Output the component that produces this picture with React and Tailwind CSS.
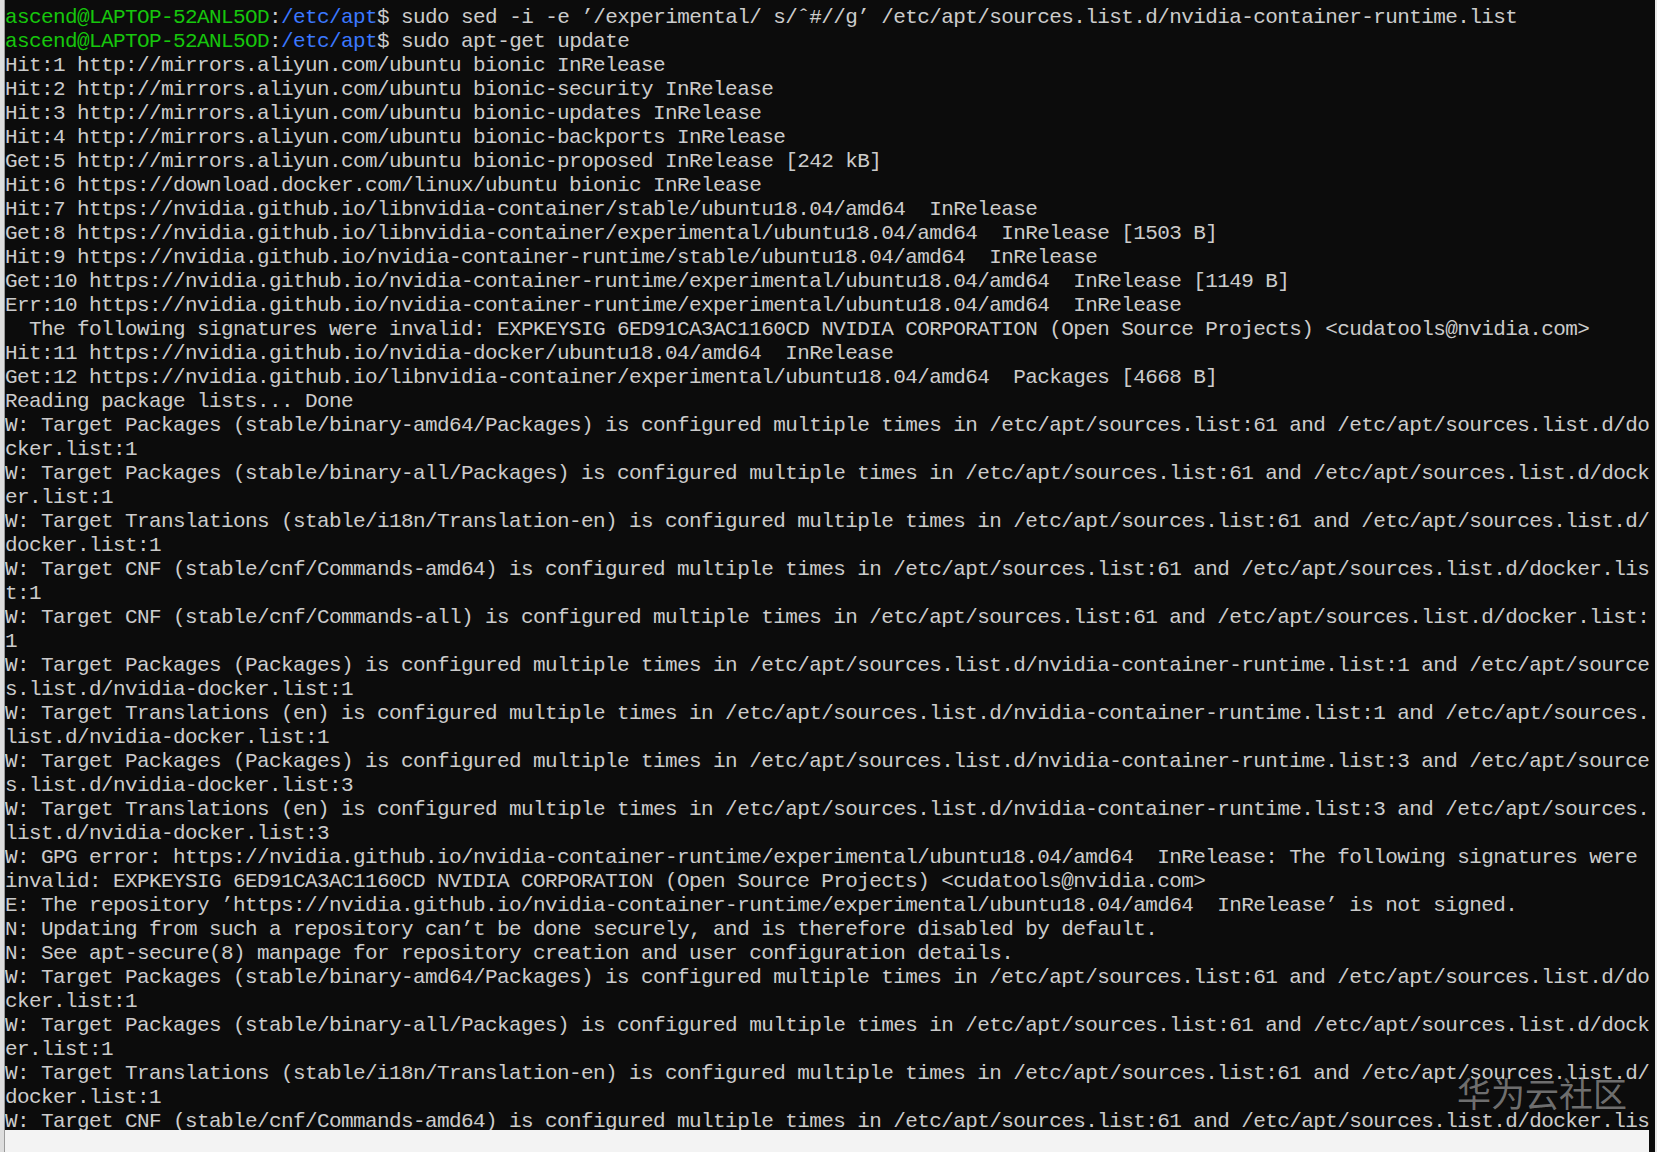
const PROMPT_USER = 'ascend@LAPTOP-52ANL5OD';

const prompts = [
  "sudo sed -i -e \u2019/experimental/ s/\u02c6#//g\u2019 /etc/apt/sources.list.d/nvidia-container-runtime.list",
  'sudo apt-get update',
];

const warnA = [
  'W: Target Packages (stable/binary-amd64/Packages) is configured multiple times in /etc/apt/sources.list:61 and /etc/apt/sources.list.d/do',
  'cker.list:1',
  'W: Target Packages (stable/binary-all/Packages) is configured multiple times in /etc/apt/sources.list:61 and /etc/apt/sources.list.d/dock',
  'er.list:1',
  'W: Target Translations (stable/i18n/Translation-en) is configured multiple times in /etc/apt/sources.list:61 and /etc/apt/sources.list.d/',
  'docker.list:1',
];

const output = [
  'Hit:1 http://mirrors.aliyun.com/ubuntu bionic InRelease',
  'Hit:2 http://mirrors.aliyun.com/ubuntu bionic-security InRelease',
  'Hit:3 http://mirrors.aliyun.com/ubuntu bionic-updates InRelease',
  'Hit:4 http://mirrors.aliyun.com/ubuntu bionic-backports InRelease',
  'Get:5 http://mirrors.aliyun.com/ubuntu bionic-proposed InRelease [242 kB]',
  'Hit:6 https://download.docker.com/linux/ubuntu bionic InRelease',
  'Hit:7 https://nvidia.github.io/libnvidia-container/stable/ubuntu18.04/amd64  InRelease',
  'Get:8 https://nvidia.github.io/libnvidia-container/experimental/ubuntu18.04/amd64  InRelease [1503 B]',
  'Hit:9 https://nvidia.github.io/nvidia-container-runtime/stable/ubuntu18.04/amd64  InRelease',
  'Get:10 https://nvidia.github.io/nvidia-container-runtime/experimental/ubuntu18.04/amd64  InRelease [1149 B]',
  'Err:10 https://nvidia.github.io/nvidia-container-runtime/experimental/ubuntu18.04/amd64  InRelease',
  '  The following signatures were invalid: EXPKEYSIG 6ED91CA3AC1160CD NVIDIA CORPORATION (Open Source Projects) <cudatools@nvidia.com>',
  'Hit:11 https://nvidia.github.io/nvidia-docker/ubuntu18.04/amd64  InRelease',
  'Get:12 https://nvidia.github.io/libnvidia-container/experimental/ubuntu18.04/amd64  Packages [4668 B]',
  'Reading package lists... Done',
  ...warnA,
  'W: Target CNF (stable/cnf/Commands-amd64) is configured multiple times in /etc/apt/sources.list:61 and /etc/apt/sources.list.d/docker.lis',
  't:1',
  'W: Target CNF (stable/cnf/Commands-all) is configured multiple times in /etc/apt/sources.list:61 and /etc/apt/sources.list.d/docker.list:',
  '1',
  'W: Target Packages (Packages) is configured multiple times in /etc/apt/sources.list.d/nvidia-container-runtime.list:1 and /etc/apt/source',
  's.list.d/nvidia-docker.list:1',
  'W: Target Translations (en) is configured multiple times in /etc/apt/sources.list.d/nvidia-container-runtime.list:1 and /etc/apt/sources.',
  'list.d/nvidia-docker.list:1',
  'W: Target Packages (Packages) is configured multiple times in /etc/apt/sources.list.d/nvidia-container-runtime.list:3 and /etc/apt/source',
  's.list.d/nvidia-docker.list:3',
  'W: Target Translations (en) is configured multiple times in /etc/apt/sources.list.d/nvidia-container-runtime.list:3 and /etc/apt/sources.',
  'list.d/nvidia-docker.list:3',
  'W: GPG error: https://nvidia.github.io/nvidia-container-runtime/experimental/ubuntu18.04/amd64  InRelease: The following signatures were',
  'invalid: EXPKEYSIG 6ED91CA3AC1160CD NVIDIA CORPORATION (Open Source Projects) <cudatools@nvidia.com>',
  'E: The repository \u2019https://nvidia.github.io/nvidia-container-runtime/experimental/ubuntu18.04/amd64  InRelease\u2019 is not signed.',
  'N: Updating from such a repository can\u2019t be done securely, and is therefore disabled by default.',
  'N: See apt-secure(8) manpage for repository creation and user configuration details.',
  ...warnA,
  'W: Target CNF (stable/cnf/Commands-amd64) is configured multiple times in /etc/apt/sources.list:61 and /etc/apt/sources.list.d/docker.lis',
];

function PromptLine({ cmd }) {
  return (
    <div className="h-[24px]">
      <span className="text-[#16c60c]">{PROMPT_USER}</span>
      <span>:</span>
      <span className="text-[#3b78ff]">/etc/apt</span>
      <span>$ {cmd}</span>
    </div>
  );
}

export default function App() {
  return (
    <div className="w-[1657px] h-[1152px] flex bg-[#f3f3f3] overflow-hidden">
      {/* window edge */}
      <div className="w-[5px] h-full flex">
        <div className="w-[4px] bg-[#dedede]" />
        <div className="w-[1px] bg-[#9a9a9a]" />
      </div>

      <div className="flex-1 flex flex-col">
        <div className="relative h-[1130px] bg-[#0c0c0c] overflow-hidden pt-[6px] text-[#cccccc] font-['Liberation_Mono',monospace] text-[21px] leading-[24px] tracking-[-0.6px] whitespace-pre">
          {prompts.map((cmd, i) => (
            <PromptLine key={i} cmd={cmd} />
          ))}
          {output.map((line, i) => (
            <div key={i} className="h-[24px]">
              {line}
            </div>
          ))}

          {/* watermark */}
          <div className="absolute left-[1452px] top-[1073px] text-[34px] leading-[40px] tracking-normal text-[#8a8a8a]/80 font-['Noto_Sans_CJK_SC',sans-serif]">
            华为云社区
          </div>
        </div>
        <div className="flex-1 bg-[#f3f3f3]" />
      </div>

      <div className="w-[6px] h-full bg-[#0c0c0c]" />
      <div className="w-[2px] h-full bg-[#e8e8e8]" />
    </div>
  );
}
